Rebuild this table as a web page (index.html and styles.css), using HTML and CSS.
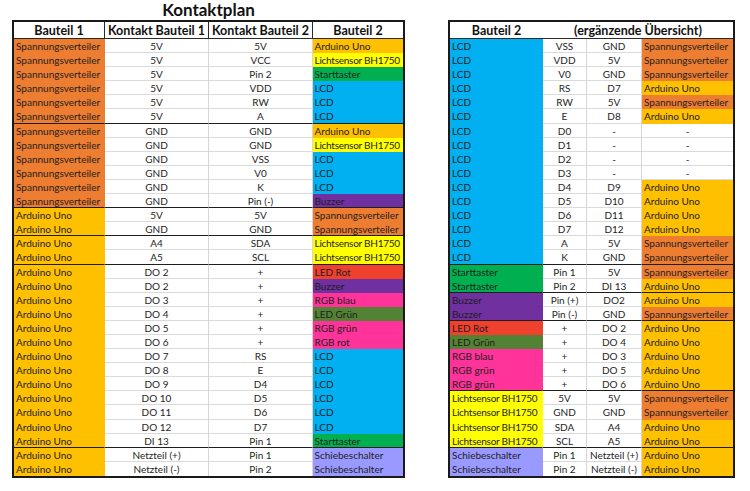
FILE: index.html
```html
<!DOCTYPE html>
<html lang="de">
<head>
<meta charset="utf-8">
<title>Kontaktplan</title>
<link rel="stylesheet" href="styles.css">
</head>
<body>
<div class="page">
  <div class="title">Kontaktplan</div>
  <div class="tables">
    <div class="table t1">
      <div class="row head">
        <div class="c h">Bauteil 1</div><div class="c h">Kontakt Bauteil 1</div><div class="c h">Kontakt Bauteil 2</div><div class="c h last">Bauteil 2</div>
      </div>
      <div class="row"><div class="c l sv">Spannungsverteiler</div><div class="c">5V</div><div class="c">5V</div><div class="c l ard">Arduino Uno</div></div>
      <div class="row"><div class="c l sv">Spannungsverteiler</div><div class="c">5V</div><div class="c">VCC</div><div class="c l lic">Lichtsensor BH1750</div></div>
      <div class="row"><div class="c l sv">Spannungsverteiler</div><div class="c">5V</div><div class="c">Pin 2</div><div class="c l st">Starttaster</div></div>
      <div class="row"><div class="c l sv">Spannungsverteiler</div><div class="c">5V</div><div class="c">VDD</div><div class="c l lcd">LCD</div></div>
      <div class="row"><div class="c l sv">Spannungsverteiler</div><div class="c">5V</div><div class="c">RW</div><div class="c l lcd">LCD</div></div>
      <div class="row end"><div class="c l sv">Spannungsverteiler</div><div class="c">5V</div><div class="c">A</div><div class="c l lcd">LCD</div></div>
      <div class="row"><div class="c l sv">Spannungsverteiler</div><div class="c">GND</div><div class="c">GND</div><div class="c l ard">Arduino Uno</div></div>
      <div class="row"><div class="c l sv">Spannungsverteiler</div><div class="c">GND</div><div class="c">GND</div><div class="c l lic">Lichtsensor BH1750</div></div>
      <div class="row"><div class="c l sv">Spannungsverteiler</div><div class="c">GND</div><div class="c">VSS</div><div class="c l lcd">LCD</div></div>
      <div class="row"><div class="c l sv">Spannungsverteiler</div><div class="c">GND</div><div class="c">V0</div><div class="c l lcd">LCD</div></div>
      <div class="row"><div class="c l sv">Spannungsverteiler</div><div class="c">GND</div><div class="c">K</div><div class="c l lcd">LCD</div></div>
      <div class="row end"><div class="c l sv">Spannungsverteiler</div><div class="c">GND</div><div class="c">Pin (-)</div><div class="c l buz">Buzzer</div></div>
      <div class="row"><div class="c l ard">Arduino Uno</div><div class="c">5V</div><div class="c">5V</div><div class="c l sv">Spannungsverteiler</div></div>
      <div class="row end"><div class="c l ard">Arduino Uno</div><div class="c">GND</div><div class="c">GND</div><div class="c l sv">Spannungsverteiler</div></div>
      <div class="row"><div class="c l ard">Arduino Uno</div><div class="c">A4</div><div class="c">SDA</div><div class="c l lic">Lichtsensor BH1750</div></div>
      <div class="row end"><div class="c l ard">Arduino Uno</div><div class="c">A5</div><div class="c">SCL</div><div class="c l lic">Lichtsensor BH1750</div></div>
      <div class="row"><div class="c l ard">Arduino Uno</div><div class="c">DO 2</div><div class="c">+</div><div class="c l red">LED Rot</div></div>
      <div class="row"><div class="c l ard">Arduino Uno</div><div class="c">DO 2</div><div class="c">+</div><div class="c l buz">Buzzer</div></div>
      <div class="row"><div class="c l ard">Arduino Uno</div><div class="c">DO 3</div><div class="c">+</div><div class="c l pink">RGB blau</div></div>
      <div class="row"><div class="c l ard">Arduino Uno</div><div class="c">DO 4</div><div class="c">+</div><div class="c l lg">LED Grün</div></div>
      <div class="row"><div class="c l ard">Arduino Uno</div><div class="c">DO 5</div><div class="c">+</div><div class="c l pink">RGB grün</div></div>
      <div class="row"><div class="c l ard">Arduino Uno</div><div class="c">DO 6</div><div class="c">+</div><div class="c l pink">RGB rot</div></div>
      <div class="row"><div class="c l ard">Arduino Uno</div><div class="c">DO 7</div><div class="c">RS</div><div class="c l lcd">LCD</div></div>
      <div class="row"><div class="c l ard">Arduino Uno</div><div class="c">DO 8</div><div class="c">E</div><div class="c l lcd">LCD</div></div>
      <div class="row"><div class="c l ard">Arduino Uno</div><div class="c">DO 9</div><div class="c">D4</div><div class="c l lcd">LCD</div></div>
      <div class="row"><div class="c l ard">Arduino Uno</div><div class="c">DO 10</div><div class="c">D5</div><div class="c l lcd">LCD</div></div>
      <div class="row"><div class="c l ard">Arduino Uno</div><div class="c">DO 11</div><div class="c">D6</div><div class="c l lcd">LCD</div></div>
      <div class="row"><div class="c l ard">Arduino Uno</div><div class="c">DO 12</div><div class="c">D7</div><div class="c l lcd">LCD</div></div>
      <div class="row end"><div class="c l ard">Arduino Uno</div><div class="c">DI 13</div><div class="c">Pin 1</div><div class="c l st">Starttaster</div></div>
      <div class="row"><div class="c l ard">Arduino Uno</div><div class="c">Netzteil (+)</div><div class="c">Pin 1</div><div class="c l sch">Schiebeschalter</div></div>
      <div class="row final"><div class="c l ard">Arduino Uno</div><div class="c">Netzteil (-)</div><div class="c">Pin 2</div><div class="c l sch">Schiebeschalter</div></div>
    </div>

    <div class="table t2">
      <div class="row head">
        <div class="c h nb">Bauteil 2</div><div class="c h span3">(ergänzende Übersicht)</div>
      </div>
      <div class="row"><div class="c l lcd">LCD</div><div class="c">VSS</div><div class="c">GND</div><div class="c l sv">Spannungsverteiler</div></div>
      <div class="row"><div class="c l lcd">LCD</div><div class="c">VDD</div><div class="c">5V</div><div class="c l sv">Spannungsverteiler</div></div>
      <div class="row"><div class="c l lcd">LCD</div><div class="c">V0</div><div class="c">GND</div><div class="c l sv">Spannungsverteiler</div></div>
      <div class="row"><div class="c l lcd">LCD</div><div class="c">RS</div><div class="c">D7</div><div class="c l ard">Arduino Uno</div></div>
      <div class="row"><div class="c l lcd">LCD</div><div class="c">RW</div><div class="c">5V</div><div class="c l sv">Spannungsverteiler</div></div>
      <div class="row"><div class="c l lcd">LCD</div><div class="c">E</div><div class="c">D8</div><div class="c l ard">Arduino Uno</div></div>
      <div class="row"><div class="c l lcd">LCD</div><div class="c">D0</div><div class="c">-</div><div class="c">-</div></div>
      <div class="row"><div class="c l lcd">LCD</div><div class="c">D1</div><div class="c">-</div><div class="c">-</div></div>
      <div class="row"><div class="c l lcd">LCD</div><div class="c">D2</div><div class="c">-</div><div class="c">-</div></div>
      <div class="row"><div class="c l lcd">LCD</div><div class="c">D3</div><div class="c">-</div><div class="c">-</div></div>
      <div class="row"><div class="c l lcd">LCD</div><div class="c">D4</div><div class="c">D9</div><div class="c l ard">Arduino Uno</div></div>
      <div class="row"><div class="c l lcd">LCD</div><div class="c">D5</div><div class="c">D10</div><div class="c l ard">Arduino Uno</div></div>
      <div class="row"><div class="c l lcd">LCD</div><div class="c">D6</div><div class="c">D11</div><div class="c l ard">Arduino Uno</div></div>
      <div class="row"><div class="c l lcd">LCD</div><div class="c">D7</div><div class="c">D12</div><div class="c l ard">Arduino Uno</div></div>
      <div class="row"><div class="c l lcd">LCD</div><div class="c">A</div><div class="c">5V</div><div class="c l sv">Spannungsverteiler</div></div>
      <div class="row end"><div class="c l lcd">LCD</div><div class="c">K</div><div class="c">GND</div><div class="c l sv">Spannungsverteiler</div></div>
      <div class="row"><div class="c l st">Starttaster</div><div class="c">Pin 1</div><div class="c">5V</div><div class="c l sv">Spannungsverteiler</div></div>
      <div class="row end"><div class="c l st">Starttaster</div><div class="c">Pin 2</div><div class="c">DI 13</div><div class="c l ard">Arduino Uno</div></div>
      <div class="row"><div class="c l buz">Buzzer</div><div class="c">Pin (+)</div><div class="c">DO2</div><div class="c l ard">Arduino Uno</div></div>
      <div class="row end"><div class="c l buz">Buzzer</div><div class="c">Pin (-)</div><div class="c">GND</div><div class="c l sv">Spannungsverteiler</div></div>
      <div class="row"><div class="c l red">LED Rot</div><div class="c">+</div><div class="c">DO 2</div><div class="c l ard">Arduino Uno</div></div>
      <div class="row"><div class="c l lg">LED Grün</div><div class="c">+</div><div class="c">DO 4</div><div class="c l ard">Arduino Uno</div></div>
      <div class="row"><div class="c l pink">RGB blau</div><div class="c">+</div><div class="c">DO 3</div><div class="c l ard">Arduino Uno</div></div>
      <div class="row"><div class="c l pink">RGB grün</div><div class="c">+</div><div class="c">DO 5</div><div class="c l ard">Arduino Uno</div></div>
      <div class="row end"><div class="c l pink">RGB grün</div><div class="c">+</div><div class="c">DO 6</div><div class="c l ard">Arduino Uno</div></div>
      <div class="row"><div class="c l lic">Lichtsensor BH1750</div><div class="c">5V</div><div class="c">5V</div><div class="c l sv">Spannungsverteiler</div></div>
      <div class="row"><div class="c l lic">Lichtsensor BH1750</div><div class="c">GND</div><div class="c">GND</div><div class="c l sv">Spannungsverteiler</div></div>
      <div class="row"><div class="c l lic">Lichtsensor BH1750</div><div class="c">SDA</div><div class="c">A4</div><div class="c l ard">Arduino Uno</div></div>
      <div class="row end"><div class="c l lic">Lichtsensor BH1750</div><div class="c">SCL</div><div class="c">A5</div><div class="c l ard">Arduino Uno</div></div>
      <div class="row"><div class="c l sch">Schiebeschalter</div><div class="c">Pin 1</div><div class="c">Netzteil (+)</div><div class="c l ard">Arduino Uno</div></div>
      <div class="row final"><div class="c l sch">Schiebeschalter</div><div class="c">Pin 2</div><div class="c">Netzteil (-)</div><div class="c l ard">Arduino Uno</div></div>
    </div>
  </div>
</div>
</body>
</html>
```

FILE: styles.css
```css
* { box-sizing: border-box; }

html, body {
  margin: 0;
  background: #ffffff;
}

body {
  font-family: Lato, "Open Sans", sans-serif;
  color: #1e1e1e;
}

.page {
  display: flex;
  flex-direction: column;
  width: 750px;
  height: 491px;
}

.title {
  height: 20px;
  width: 393px;
  margin-left: 12px;
  text-align: center;
  font-weight: 700;
  font-size: 17px;
  line-height: 20px;
  color: #111;
}

.tables {
  display: flex;
  align-items: flex-start;
  gap: 43px;
  padding-left: 12px;
}

.table {
  display: flex;
  flex-direction: column;
  border: 2px solid #1a1a1a;
  background: #fff;
}

.t1 { width: 393px; }
.t2 { width: 287px; }

.row {
  display: grid;
  height: 14.1px;
}

.t1 .row { grid-template-columns: 91px 104px 104px 90px; }
.t2 .row { grid-template-columns: 93px 44px 55px 91px; }

.row.head { height: 17px; }

.c {
  border-right: 1px solid #d6d6d6;
  border-bottom: 1px solid #dadada;
  font-size: 10px;
  line-height: 12px;
  padding-top: 1px;
  text-align: center;
  white-space: nowrap;
  overflow: hidden;
}

.c.l {
  text-align: left;
  padding-left: 2px;
}

.t1 .row > .c.l:last-child { padding-left: 1.5px; }

.c.h {
  font-weight: 700;
  font-size: 12.5px;
  line-height: 14px;
  padding-top: 2px;
  color: #111;
  border-right-color: #2a2a2a;
  border-bottom-color: #2a2a2a;
}

.c.h.last, .c.h.span3, .c.h.nb { border-right: none; }
.span3 { grid-column: span 3; }

.row > .c:last-child { border-right: none; }

/* coloured component cells */
.sv   { background: #ed7d31; }
.ard  { background: #ffc000; }
.lic  { background: #ffff00; letter-spacing: -0.25px; }
.st   { background: #00b050; }
.lcd  { background: #00b0f0; }
.buz  { background: #7030a0; }
.red  { background: #f0412f; }
.pink { background: #ff3399; }
.lg   { background: #548235; }
.sch  { background: #9999ff; }

.sv, .ard, .lic, .st, .lcd, .buz, .red, .pink, .lg, .sch {
  border-bottom-color: transparent;
  border-right-color: transparent;
}

.row.end > .c { border-bottom-color: #1e1e1e; }
.row.final > .c { border-bottom: none; }
```
